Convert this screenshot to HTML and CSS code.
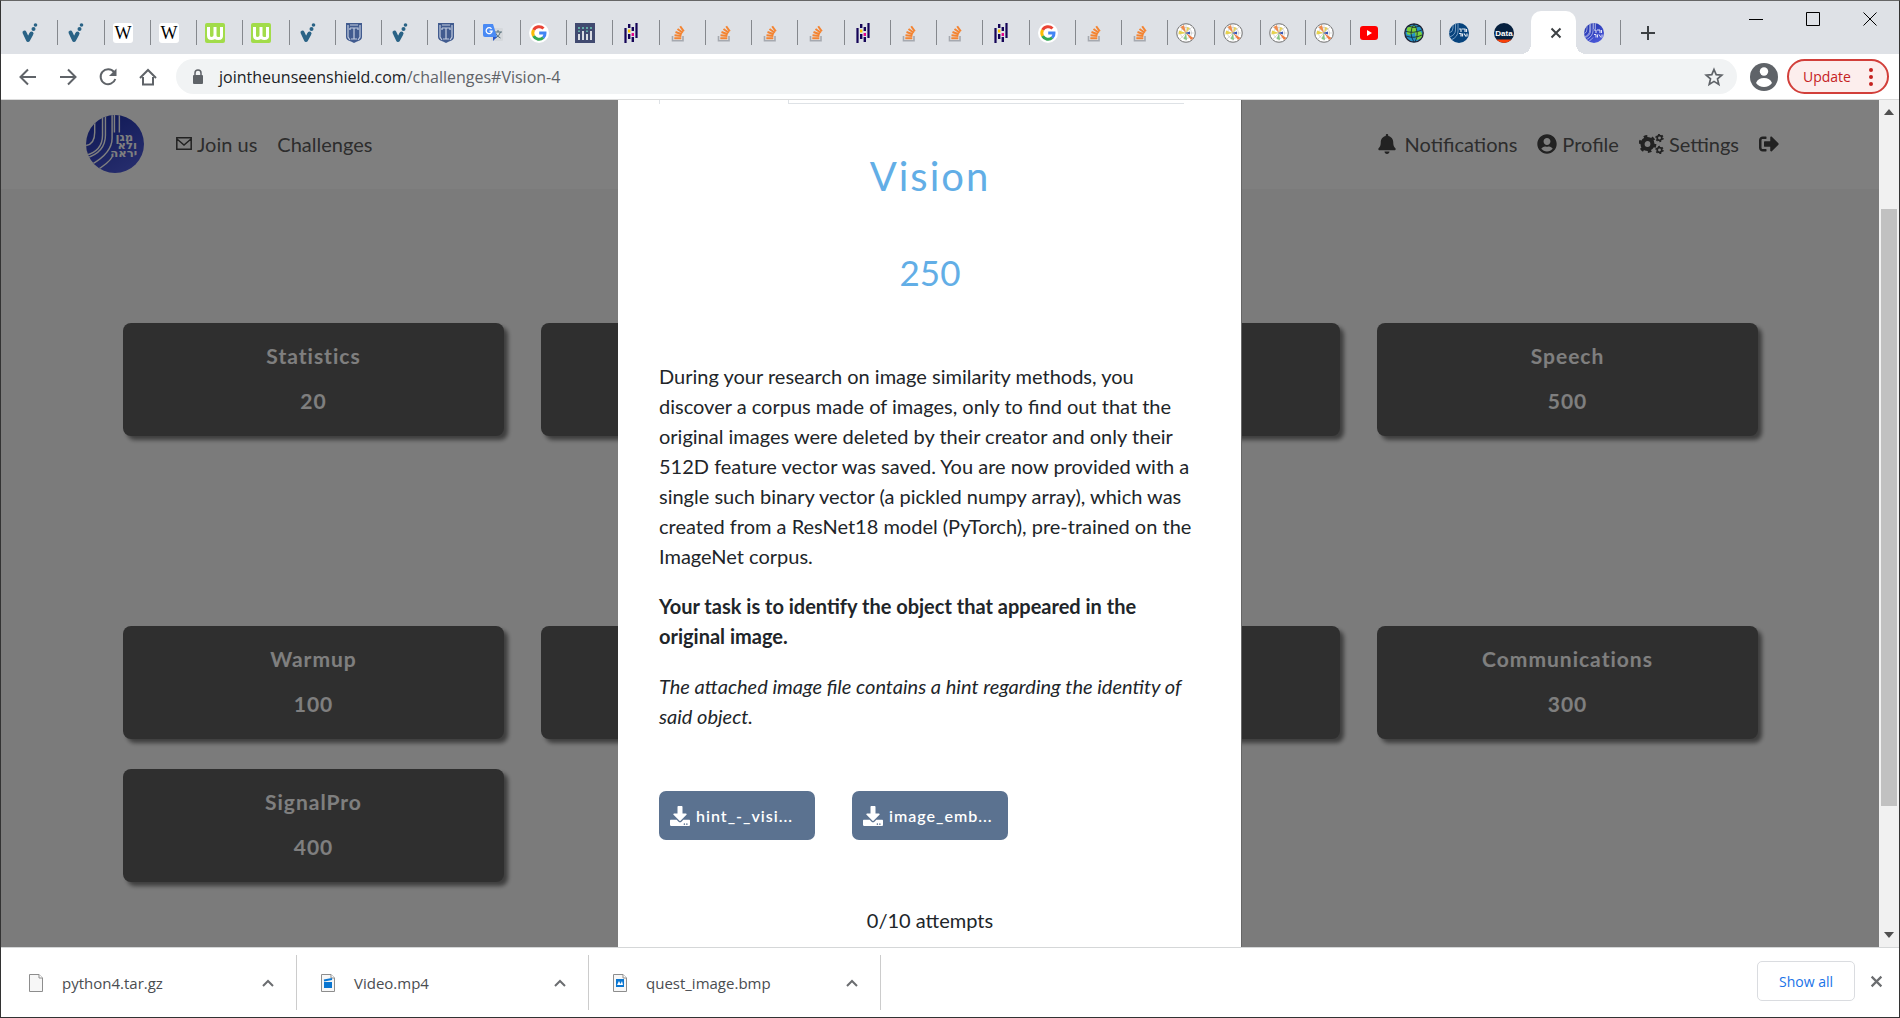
FILE: index.html
```html
<!DOCTYPE html>
<html lang="en">
<head>
<meta charset="utf-8">
<title>Challenges</title>
<link rel="stylesheet" href="styles.css">
</head>
<body>
<svg class="sprite" aria-hidden="true">
  <defs>
    <linearGradient id="shieldFill" x1="0" y1="0" x2="0.6" y2="1"><stop offset="0" stop-color="#1c2fa8"/><stop offset="1" stop-color="#4a58d8"/></linearGradient>
    <clipPath id="round"><circle cx="10" cy="10" r="10"/></clipPath>
  </defs>
  <symbol id="i-check" viewBox="0 0 20 20"><path d="M4.500 9.500 8 17 11 11.500" fill="none" stroke="#2a6386" stroke-width="4" stroke-linecap="round" stroke-linejoin="round"/><circle cx="11.500" cy="10.500" r="2" fill="#2a6386"/><circle cx="13.500" cy="6" r="2" fill="#2a6386"/><circle cx="15.500" cy="2" r="1.800" fill="#2a6386"/></symbol>
  <symbol id="i-wgreen" viewBox="0 0 20 20"><rect width="20" height="20" rx="2" fill="#a2dc4a"/><path d="M3.500 4v8.500q0 3 3 3t3.500-3V4v8.500q0 3 3.500 3t3-3V4" fill="none" stroke="#fff" stroke-width="3"/></symbol>
  <symbol id="i-emblem" viewBox="0 0 20 20"><path d="M2 0h16v14q0 3-5 4.500L10 20l-3-1.500Q2 17 2 14z" fill="#415b8f"/><path d="M4 2v12l2 3M16 2v12l-2 3M6 2h8M6 5h8v2M6 5v2M10 5v11M7 16h6" fill="none" stroke="#c3cde0" stroke-width="1.200"/></symbol>
  <symbol id="i-translate" viewBox="0 0 20 20"><rect x="8" y="5" width="12" height="13" rx="1" fill="#d5d8dc"/><path d="M11 9h8M15 7v2M17.500 9q-1 4-5 6M12.500 10q2 4 5 5" stroke="#57707c" fill="none"/><path d="M1 1h9l4 13H2q-2 0-2-2V2q0-1 1-1z" fill="#4a8af4"/><path d="m10 14 4 0-4 4z" fill="#2a56c6"/><path d="M8.500 5.800a3 3 0 1 0 .6 2.400H6.500" fill="none" stroke="#fff" stroke-width="1.300"/></symbol>
  <symbol id="i-google" viewBox="0 0 20 20"><circle cx="10" cy="10" r="10" fill="#fff"/><g fill="none" stroke-width="3"><path d="M14.500 5.500A6.200 6.200 0 0 0 4.600 7" stroke="#ea4335"/><path d="M4.600 7a6.200 6.200 0 0 0 0 6" stroke="#fbbc05"/><path d="M4.600 13a6.200 6.200 0 0 0 9.600 1.700" stroke="#34a853"/><path d="M14.200 14.700A6 6 0 0 0 16 10H10.200" stroke="#4285f4"/></g></symbol>
  <symbol id="i-plotly" viewBox="0 0 20 20"><rect width="20" height="20" fill="#414a70"/><path d="M4 11v6M8 8v9M12 11v6M16 8v9" stroke="#fff" stroke-width="1.600"/><path d="M4 4v2M4 7.500v1.500M8 4v2M12 4v2M12 7.500v1.500M16 4v2" stroke="#69c4b5" stroke-width="1.600"/></symbol>
  <symbol id="i-pandas" viewBox="0 0 20 20"><path d="M4.500 5v15M15.500 0v15" stroke="#150458" stroke-width="2.200"/><path d="M8.200 1v4M8.200 11v5M11.800 4v4M11.800 14v5" stroke="#150458" stroke-width="2.400"/><path d="M8.200 6.500v3" stroke="#ffca00" stroke-width="2.400"/><path d="M11.800 10v3" stroke="#e70488" stroke-width="2.400"/></symbol>
  <symbol id="i-stack" viewBox="0 0 20 20"><path d="M4.500 13v4.800h10.500V13" fill="none" stroke="#a5a9b0" stroke-width="1.600"/><path d="M6.300 15.300h7M6.500 12.300l6.900.7M7.500 9l6.300 2.200M9.500 6l5.300 3.800M12.200 3.200l3.600 5.200" stroke="#f48432" stroke-width="2"/></symbol>
  <symbol id="i-mpl" viewBox="0 0 20 20"><circle cx="10" cy="10" r="9.300" fill="#fff" stroke="#6d6d6d"/><circle cx="10" cy="10" r="5.500" fill="none" stroke="#bbb" stroke-width=".6"/><path d="M0 10h20M10 0v20M3 3l14 14M17 3 3 17" stroke="#bbb" stroke-width=".5"/><path d="M10 10 4.500 4l3.500-2z" fill="#f08a4b"/><path d="M10 10 2.500 11.500l.5-4z" fill="#e7d24d"/><path d="m10 10 5 7 2.500-2z" fill="#ee7d42"/><path d="m10 10 1-6 3 1z" fill="#e5cf5a"/><path d="m10 10-2.500 6 3.500 1z" fill="#85c785"/><path d="m9 10 5-1.500v3z" fill="#3957b5"/></symbol>
  <symbol id="i-youtube" viewBox="0 0 20 20"><rect x="1" y="3" width="18" height="14" rx="3" fill="#f00"/><path d="m8 7 5 3-5 3z" fill="#fff"/></symbol>
  <symbol id="i-globe" viewBox="0 0 20 20"><circle cx="10" cy="10" r="9.200" fill="#2492c8" stroke="#223" stroke-width="1.300"/><path d="M3 5q6-4 9-1t-2 6-7 1zM11 9q6-3 7 2t-6 6z" fill="#7bd03b"/><path d="M2 13q8 3 16-1M1 8q8 3 17-1M4 3q6 3 12 0M10 1q-6 9 0 18M10 1q6 9 1 18" fill="none" stroke="#123" stroke-width=".8"/></symbol>
  <symbol id="i-shield-blue" viewBox="0 0 20 20"><circle cx="10" cy="10" r="10" fill="#06437d"/><g clip-path="url(#round)" fill="none" stroke="#8fb0d0" stroke-width=".8"><path d="M4 0v5q0 4-4 5M6.500 0v7q0 5-6 7M9 0v8q0 6-7 9"/></g></symbol>
  <symbol id="i-data" viewBox="0 0 20 20"><g clip-path="url(#round)"><rect width="20" height="20" fill="#06203f"/><rect y="16.500" width="20" height="4" fill="#f9410a"/></g></symbol>
  <symbol id="i-shield" viewBox="0 0 20 20"><circle cx="10" cy="10" r="10" fill="url(#shieldFill)"/><g clip-path="url(#round)" fill="none" stroke="#fff" stroke-width=".5"><path d="M3 2v4q0 4-3 4.500M5.700 0v7q0 5.500-6 7M6.700 0v7q0 6-7 8M9 0v8q0 5-7 9M9.800 0v6M11.500 0v6M9 14.500q-1 2-6 5"/></g></symbol>
  <symbol id="i-bell" viewBox="0 0 448 512"><path d="M224 512c35.320 0 63.970-28.650 63.970-64H160.030c0 35.350 28.650 64 63.970 64zm215.390-149.710c-19.320-20.760-55.470-51.990-55.470-154.290 0-77.700-54.480-139.900-127.940-155.160V32c0-17.670-14.320-32-31.980-32s-31.980 14.330-31.980 32v20.840C118.560 68.100 64.080 130.300 64.080 208c0 102.300-36.150 133.530-55.470 154.290-6 6.450-8.660 14.160-8.610 21.710.110 16.400 12.980 32 32.100 32h383.800c19.120 0 32-15.600 32.100-32 .050-7.550-2.610-15.270-8.610-21.710z"/></symbol>
  <symbol id="i-user" viewBox="0 0 496 512"><path d="M248 8C111 8 0 119 0 256s111 248 248 248 248-111 248-248S385 8 248 8zm0 96c48.600 0 88 39.400 88 88s-39.400 88-88 88-88-39.400-88-88 39.400-88 88-88zm0 344c-58.700 0-111.300-26.600-146.500-68.200 18.800-35.400 55.600-59.800 98.500-59.800 2.400 0 4.800.4 7.100 1.100 13 4.200 26.600 6.900 40.900 6.900 14.300 0 28-2.700 40.900-6.900 2.300-.7 4.700-1.100 7.100-1.100 42.900 0 79.700 24.400 98.500 59.800C359.300 421.400 306.700 448 248 448z"/></symbol>
  <symbol id="i-cogs" viewBox="0 0 25 20"><g fill="none" stroke="#444"><circle cx="8.500" cy="10" r="5" stroke-width="4.200"/><circle cx="8.500" cy="10" r="7.600" stroke-width="2.600" stroke-dasharray="3.560 4.400"/><circle cx="20.500" cy="4" r="2.300" stroke-width="1.700"/><circle cx="20.500" cy="4" r="3.500" stroke-width="1.400" stroke-dasharray="1.830 1.830"/><circle cx="20.500" cy="16" r="2.300" stroke-width="1.700"/><circle cx="20.500" cy="16" r="3.500" stroke-width="1.400" stroke-dasharray="1.830 1.830"/></g></symbol>
  <symbol id="i-signout" viewBox="0 0 512 512"><path d="M497 273L329 441c-15 15-41 4.500-41-17v-96H152c-13.300 0-24-10.700-24-24v-96c0-13.300 10.700-24 24-24h136V88c0-21.400 25.900-32 41-17l168 168c9.300 9.400 9.300 24.600 0 34zM192 436v-40c0-6.600-5.400-12-12-12H96c-17.700 0-32-14.300-32-32V160c0-17.700 14.300-32 32-32h84c6.600 0 12-5.400 12-12V76c0-6.600-5.400-12-12-12H96c-53 0-96 43-96 96v192c0 53 43 96 96 96h84c6.600 0 12-5.400 12-12z"/></symbol>
  <symbol id="i-download" viewBox="0 0 512 512"><path d="M216 0h80c13.300 0 24 10.700 24 24v168h87.700c17.800 0 26.700 21.500 14.100 34.100L269.700 378.300c-7.500 7.500-19.800 7.500-27.300 0L90.100 226.100c-12.600-12.600-3.700-34.100 14.100-34.100H192V24c0-13.300 10.700-24 24-24zm296 376v112c0 13.300-10.700 24-24 24H24c-13.300 0-24-10.700-24-24V376c0-13.300 10.700-24 24-24h146.700l49 49c20.100 20.100 52.500 20.100 72.600 0l49-49H488c13.300 0 24 10.700 24 24zm-124 88c0-11-9-20-20-20s-20 9-20 20 9 20 20 20 20-9 20-20zm64 0c0-11-9-20-20-20s-20 9-20 20 9 20 20 20 20-9 20-20z" fill="#fff"/></symbol>
  <symbol id="i-x" viewBox="0 0 12 12"><path d="m1.500 1.500 9 9m0-9-9 9" stroke="currentColor" stroke-width="2" fill="none"/></symbol>
  <symbol id="i-up" viewBox="0 0 12 8"><path d="m1 7 5-5 5 5" stroke="#6b6d70" stroke-width="2" fill="none"/></symbol>
  <symbol id="i-page" viewBox="0 0 14 18"><path d="M.5.5h9.500l3.500 3.500v13.500H.5z" fill="#f7f7f7" stroke="#8d8d8d"/><path d="M10 .5V4h3.500" fill="#fff" stroke="#8d8d8d"/></symbol>
</svg>

<div class="window">
  <header class="titlebar">
    <nav class="tabs" aria-label="Tabs">
      <div class="tab"><svg><use href="#i-check"/></svg></div>
      <div class="tab"><svg><use href="#i-check"/></svg></div>
      <div class="tab"><svg viewBox="0 0 20 20"><rect width="20" height="20" rx="3" fill="#fff"/><text class="wiki" x="10" y="16">W</text></svg></div>
      <div class="tab"><svg viewBox="0 0 20 20"><rect width="20" height="20" rx="3" fill="#fff"/><text class="wiki" x="10" y="16">W</text></svg></div>
      <div class="tab"><svg><use href="#i-wgreen"/></svg></div>
      <div class="tab"><svg><use href="#i-wgreen"/></svg></div>
      <div class="tab"><svg><use href="#i-check"/></svg></div>
      <div class="tab"><svg><use href="#i-emblem"/></svg></div>
      <div class="tab"><svg><use href="#i-check"/></svg></div>
      <div class="tab"><svg><use href="#i-emblem"/></svg></div>
      <div class="tab"><svg><use href="#i-translate"/></svg></div>
      <div class="tab"><svg><use href="#i-google"/></svg></div>
      <div class="tab"><svg><use href="#i-plotly"/></svg></div>
      <div class="tab"><svg><use href="#i-pandas"/></svg></div>
      <div class="tab"><svg><use href="#i-stack"/></svg></div>
      <div class="tab"><svg><use href="#i-stack"/></svg></div>
      <div class="tab"><svg><use href="#i-stack"/></svg></div>
      <div class="tab"><svg><use href="#i-stack"/></svg></div>
      <div class="tab"><svg><use href="#i-pandas"/></svg></div>
      <div class="tab"><svg><use href="#i-stack"/></svg></div>
      <div class="tab"><svg><use href="#i-stack"/></svg></div>
      <div class="tab"><svg><use href="#i-pandas"/></svg></div>
      <div class="tab"><svg><use href="#i-google"/></svg></div>
      <div class="tab"><svg><use href="#i-stack"/></svg></div>
      <div class="tab"><svg><use href="#i-stack"/></svg></div>
      <div class="tab"><svg><use href="#i-mpl"/></svg></div>
      <div class="tab"><svg><use href="#i-mpl"/></svg></div>
      <div class="tab tab-narrow"><svg><use href="#i-mpl"/></svg></div>
      <div class="tab tab-narrow"><svg><use href="#i-mpl"/></svg></div>
      <div class="tab tab-narrow"><svg><use href="#i-youtube"/></svg></div>
      <div class="tab tab-narrow"><svg><use href="#i-globe"/></svg></div>
      <div class="tab tab-narrow"><svg viewBox="0 0 20 20"><use href="#i-shield-blue"/><path d="M10 6h2v3M13 6h3v3M17.500 6v3M10 10.500h2v3M13.500 10.500v3M15 10.500l2 3M18 10.500v3" stroke="#e3eaf2" stroke-width="1.200" fill="none"/></svg></div>
      <div class="tab tab-narrow tab-last"><svg viewBox="0 0 20 20"><use href="#i-data"/><text class="data" x="10" y="13">Data</text></svg></div>
      <div class="tab tab-narrow tab-active"><button class="icon-btn tab-close" aria-label="Close tab"><svg><use href="#i-x"/></svg></button></div>
      <div class="tab tab-narrow"><svg viewBox="0 0 20 20"><use href="#i-shield"/><path d="M10 7h2v3M13 7h3v3M17.500 7v3M10 11.500h2v3M13.500 11.500v3M15 11.500l2 3M18 11.500v3" stroke="#e3e4f8" stroke-width="1" fill="none"/></svg></div>
    </nav>
    <button class="icon-btn new-tab" aria-label="New tab"><svg viewBox="0 0 16 16"><path d="M8 1v14M1 8h14" stroke="#3c4043" stroke-width="2"/></svg></button>
    <div class="window-controls">
      <button class="icon-btn" aria-label="Minimize"><svg viewBox="0 0 14 14"><path d="M0 7.500h14" stroke="#000"/></svg></button>
      <button class="icon-btn" aria-label="Maximize"><svg viewBox="0 0 14 14"><path d="M.5.5h13v13H.5z" fill="none" stroke="#000"/></svg></button>
      <button class="icon-btn" aria-label="Close"><svg viewBox="0 0 14 14"><path d="m.5.5 13 13m0-13-13 13" stroke="#000"/></svg></button>
    </div>
  </header>

  <div class="toolbar">
    <div class="nav-buttons">
      <button class="icon-btn" aria-label="Back"><svg viewBox="0 0 20 20"><path d="M18 10H3M10 2.500 2.500 10l7.500 7.500" fill="none" stroke="#5f6368" stroke-width="2"/></svg></button>
      <button class="icon-btn" aria-label="Forward"><svg viewBox="0 0 20 20"><path d="M2 10h15M10 2.500l7.500 7.500-7.500 7.500" fill="none" stroke="#5f6368" stroke-width="2"/></svg></button>
      <button class="icon-btn" aria-label="Reload"><svg viewBox="0 0 20 20"><path d="M16 5a7.500 7.500 0 1 0 1.300 7" fill="none" stroke="#5f6368" stroke-width="2"/><path d="M18.500 1.500V9H11z" fill="#5f6368"/></svg></button>
      <button class="icon-btn" aria-label="Home"><svg viewBox="0 0 20 20"><path d="M5 10v7.500h10V10M2 11l8-8 8 8" fill="none" stroke="#5f6368" stroke-width="2"/></svg></button>
    </div>
    <div class="omnibox">
      <svg class="lock" viewBox="0 0 12 16"><rect x="1" y="6" width="10" height="9" rx="1" fill="#5f6368"/><path d="M3 6V4a3 3 0 0 1 6 0v2" fill="none" stroke="#5f6368" stroke-width="1.500"/></svg>
      <div class="url"><span class="url-host">jointheunseenshield.com</span>/challenges#Vision-4</div>
      <button class="icon-btn" aria-label="Bookmark"><svg viewBox="0 0 20 20"><path d="m10 2.500 2.200 5.200 5.600.5-4.300 3.700 1.300 5.500-4.800-3-4.800 3 1.300-5.500-4.300-3.700 5.600-.5z" fill="none" stroke="#5f6368" stroke-width="1.700"/></svg></button>
    </div>
    <button class="icon-btn avatar" aria-label="Account"><svg viewBox="0 0 28 28"><circle cx="14" cy="14" r="14" fill="#5f6368"/><circle cx="14" cy="8.500" r="4.200" fill="#fff"/><path d="M6 20q2-5 8-5t8 5q-3 4-8 4t-8-4z" fill="#fff"/></svg></button>
    <button class="update">Update <svg viewBox="0 0 4 18"><g fill="#c5221f"><circle cx="2" cy="2" r="2"/><circle cx="2" cy="9" r="2"/><circle cx="2" cy="16" r="2"/></g></svg></button>
  </div>

  <div class="viewport">
    <div class="page">
      <nav class="site-nav">
        <a class="logo" href="#home" aria-label="Home"><svg viewBox="0 0 20 20"><use href="#i-shield"/><g class="logo-text"><text x="13.200" y="9">מגן</text><text x="14.200" y="11.800">ולא</text><text x="13" y="14.600">יראה</text></g></svg></a>
        <a href="#join"><svg class="mail" viewBox="0 0 16 13"><path d="M.8.8h14.400v11.400H.8zM1 2l7 6 7-6" fill="none" stroke="#444" stroke-width="1.500"/></svg>Join us</a>
        <a href="#challenges">Challenges</a>
        <span class="spacer"></span>
        <a class="wide" href="#notifications"><svg class="bell"><use href="#i-bell"/></svg>Notifications</a>
        <a href="#profile"><svg><use href="#i-user"/></svg>Profile</a>
        <a href="#settings"><svg class="cogs"><use href="#i-cogs"/></svg>Settings</a>
        <a href="#logout" aria-label="Log out"><svg><use href="#i-signout"/></svg></a>
      </nav>
      <main class="board">
        <section class="group">
          <button class="challenge"><span>Statistics</span><span>20</span></button>
          <button class="challenge" aria-label="Challenge"></button>
          <button class="challenge" aria-label="Challenge"></button>
          <button class="challenge"><span>Speech</span><span>500</span></button>
        </section>
        <section class="group">
          <button class="challenge"><span>Warmup</span><span>100</span></button>
          <button class="challenge" aria-label="Challenge"></button>
          <button class="challenge" aria-label="Challenge"></button>
          <button class="challenge"><span>Communications</span><span>300</span></button>
          <button class="challenge"><span>SignalPro</span><span>400</span></button>
        </section>
      </main>
    </div>

    <div class="backdrop">
      <div class="modal" role="dialog" aria-labelledby="title">
        <div class="modal-tabs"><span class="modal-tab"></span></div>
        <h2 class="title" id="title">Vision</h2>
        <h3 class="points">250</h3>
        <div class="description">
          <p>During your research on image similarity methods, you discover a corpus made of images, only to find out that the original images were deleted by their creator and only their 512D feature vector was saved. You are now provided with a single such binary vector (a pickled numpy array), which was created from a ResNet18 model (PyTorch), pre-trained on the ImageNet corpus.</p>
          <p><strong>Your task is to identify the object that appeared in the original image.</strong></p>
          <p><em>The attached image file contains a hint regarding the identity of said object.</em></p>
        </div>
        <div class="files">
          <a class="file" href="#hint"><svg><use href="#i-download"/></svg><span>hint_-_visi...</span></a>
          <a class="file" href="#image"><svg><use href="#i-download"/></svg><span>image_emb...</span></a>
        </div>
        <p class="attempts">0/10 attempts</p>
      </div>
    </div>

    <div class="scrollbar" aria-hidden="true">
      <svg viewBox="0 0 10 6"><path d="M0 6 5 0l5 6z" fill="#505050"/></svg>
      <div class="track"><div class="thumb"></div></div>
      <svg viewBox="0 0 10 6"><path d="M0 0h10L5 6z" fill="#505050"/></svg>
    </div>
  </div>

  <footer class="downloads">
    <div class="download"><svg class="page-icon"><use href="#i-page"/></svg><span>python4.tar.gz</span><button class="icon-btn" aria-label="Options"><svg><use href="#i-up"/></svg></button></div>
    <div class="download"><svg class="page-icon" viewBox="0 0 14 18"><use href="#i-page"/><path d="M3 8h8v6H3z" fill="#0a76d1"/><path d="m3 6.500 8-1.500" stroke="#0a76d1" stroke-width="2"/></svg><span>Video.mp4</span><button class="icon-btn" aria-label="Options"><svg><use href="#i-up"/></svg></button></div>
    <div class="download"><svg class="page-icon" viewBox="0 0 14 18"><use href="#i-page"/><path d="M3 5h8v8H3z" fill="#0a76d1"/><path d="m4 11 2-4 1.500 3L9 7l1 4z" fill="#fff"/></svg><span>quest_image.bmp</span><button class="icon-btn" aria-label="Options"><svg><use href="#i-up"/></svg></button></div>
    <span class="spacer"></span>
    <div class="shelf-actions">
      <button class="show-all">Show all</button>
      <button class="icon-btn close-bar" aria-label="Close downloads"><svg><use href="#i-x"/></svg></button>
    </div>
  </footer>
</div>
</body>
</html>
```

FILE: styles.css
```css
* { box-sizing: border-box; }
body { margin: 0; font-family: Lato, "Liberation Sans", sans-serif; font-size: 20px; color: #212529; }
.sprite { position: absolute; width: 0; height: 0; }
button { font: inherit; }
a { color: inherit; text-decoration: none; }
svg { display: block; flex: none; }
.spacer { flex: 1; }

.window {
  display: grid;
  grid-template-rows: auto auto minmax(0, 1fr) auto;
  height: 100vh;
  border: 1px solid #333;
  border-top-color: #666;
  background: #fff;
}
.icon-btn {
  display: flex;
  align-items: center;
  justify-content: center;
  padding: 0;
  border: 0;
  background: none;
}

/* Tab strip */
.titlebar { display: flex; align-items: flex-end; height: 53px; padding-left: 11px; background: #dee1e6; }
.tabs { display: flex; width: calc(100% - 278px); }
.tab { position: relative; display: flex; align-items: center; flex: 37 1 0; min-width: 0; height: 43px; }
.tab > svg { width: 20px; height: 20px; margin-left: 8px; }
.tab-narrow { flex-grow: 36; }
.tab::after { content: ""; position: absolute; right: 0; top: 9px; width: 1px; height: 25px; background: #85888d; }
.tab-last::after { display: none; }
.tab-active { justify-content: center; border-radius: 10px 10px 0 0; background: #fff; }
.tab-active::before,
.tab-active::after { content: ""; position: absolute; top: auto; bottom: 0; width: 10px; height: 10px; }
.tab-active::before { left: -10px; background: radial-gradient(circle at 0 0, transparent 10px, #fff 10px); }
.tab-active::after { right: -10px; background: radial-gradient(circle at 100% 0, transparent 10px, #fff 10px); }
.tab-close { margin-left: 6px; color: #3c4043; }
.tab-close svg { width: 12px; height: 12px; }
.wiki { font-family: "Liberation Serif", serif; font-size: 18px; text-anchor: middle; }
.data { font-family: "Liberation Sans", sans-serif; font-size: 8px; font-weight: 700; text-anchor: middle; fill: #fff; }
.new-tab { width: 32px; height: 43px; margin-left: 11px; }
.new-tab svg { width: 16px; height: 16px; }
.window-controls { display: flex; align-self: flex-start; gap: 43px; margin: 11px 22px 0 auto; }
.window-controls svg { width: 14px; height: 14px; }

/* Address bar */
.toolbar { display: flex; align-items: center; height: 46px; padding: 0 10px 0 17px; border-bottom: 1px solid #dadada; }
.nav-buttons { display: flex; gap: 20px; }
.nav-buttons svg, .omnibox .icon-btn svg { width: 20px; height: 20px; }
.omnibox { display: flex; flex: 1; align-items: center; height: 35px; margin-left: 18px; padding: 0 13px 0 16px; border-radius: 18px; background: #f1f3f4; }
.lock { width: 12px; height: 16px; }
.url { flex: 1; margin-left: 15px; font-family: "Open Sans", "Noto Sans", sans-serif; font-size: 16px; color: #5f6368; }
.url-host { color: #202124; }
.avatar { margin: 0 9px 0 13px; }
.avatar svg { width: 28px; height: 28px; }
.update { display: flex; align-items: center; justify-content: space-between; width: 102px; height: 35px; padding: 0 14px; border: 2px solid #d23f3a; border-radius: 18px; background: #fceeed; color: #c5221f; font-family: "Open Sans", "Noto Sans", sans-serif; font-size: 14px; }
.update svg { width: 4px; height: 18px; }

/* Page */
.viewport { position: relative; display: grid; grid-template-columns: minmax(0, 1fr) 20px; overflow: hidden; }
.page { overflow: hidden; background: #f7f7f7; }
.site-nav { display: flex; align-items: center; gap: 20px; height: 89px; padding: 0 100px 2px 85px; background: #fff; color: #5a5a5a; line-height: 30px; }
.site-nav a { display: flex; align-items: center; gap: 5px; }
.site-nav svg { width: 20px; height: 20px; fill: #444; }
.site-nav .logo { margin-right: 12px; }
.site-nav .logo svg { width: 58px; height: 58px; }
.logo-text { fill: #fff; font-family: "DejaVu Sans", sans-serif; font-size: 4px; font-weight: 700; text-anchor: middle; }
.site-nav .mail { width: 16px; height: 13px; }
.site-nav .bell { width: 18px; }
.site-nav .wide { gap: 9px; }
.site-nav .cogs { width: 25px; }
.board { display: grid; gap: 190px; padding: 134px 121px 0 122px; }
.group { display: grid; grid-template-columns: repeat(4, minmax(0, 1fr)); gap: 30px 37px; }
.challenge {
  display: flex;
  flex-direction: column;
  align-items: center;
  gap: 15px;
  height: 113px;
  padding: 18px 0 0;
  border: 0;
  border-radius: 8px;
  background: #5e5e5e;
  box-shadow: 4px 4px 4px rgba(0, 0, 0, 0.5);
  color: #fff;
  font-size: 21px;
  font-weight: 700;
  letter-spacing: 1px;
  line-height: 30px;
}

/* Challenge dialog */
.backdrop { position: absolute; inset: 0 20px 0 0; display: flex; justify-content: center; overflow: hidden; padding-right: 20px; background: rgba(0, 0, 0, 0.5); }
.modal { width: 624px; height: max-content; padding: 0 40px 40px 41px; border-right: 1px solid #666; background: #fff; text-align: center; }
.modal-tabs { display: flex; width: 525px; height: 4px; border-bottom: 1px solid #dee2e6; }
.modal-tab { width: 130px; height: 4px; border: 0 solid #dee2e6; border-width: 0 1px; background: #fff; }
.title { margin: 48px 0 0; color: #62aee6; font-size: 40px; font-weight: 400; letter-spacing: 2px; line-height: 48px; }
.points { margin: 51px 0 0; color: #62aee6; font-size: 35px; font-weight: 400; line-height: 42px; }
.description { margin-top: 68px; text-align: left; line-height: 30px; }
.description p { margin: 0 0 20px; }
.files { display: flex; gap: 37px; margin-top: 60px; }
.file { display: flex; align-items: center; gap: 6px; width: 156px; height: 49px; padding: 0 11px; border-radius: 7px; background: #5b7290; color: #fff; font-size: 16px; font-weight: 600; letter-spacing: 1px; }
.file svg { width: 20px; height: 20px; }
.attempts { margin: 65px 0 0; line-height: 30px; }

.scrollbar { display: flex; flex-direction: column; align-items: center; padding: 9px 0; background: #f1f1f1; }
.scrollbar svg { width: 10px; height: 6px; }
.track { flex: 1; width: 16px; padding: 94px 0 126px; }
.thumb { height: 100%; background: #c1c1c1; }

/* Download shelf */
.downloads { display: flex; align-items: center; height: 70px; padding-left: 4px; border-top: 1px solid #d5d7d8; color: #4a4d51; font-family: "Open Sans", "Noto Sans", sans-serif; font-size: 15px; }
.download { display: flex; align-items: center; width: 292px; height: 55px; padding: 0 22px 0 24px; border-right: 1px solid #ccc; }
.download span { flex: 1; margin-left: 19px; }
.download .icon-btn svg { width: 12px; height: 8px; }
.page-icon { width: 14px; height: 18px; }
.shelf-actions { display: flex; align-items: center; gap: 15px; padding: 0 16px 3px 0; }
.show-all { width: 98px; height: 40px; border: 1px solid #dadce0; border-radius: 5px; background: #fff; color: #1a73e8; font-size: 14px; }
.close-bar { color: #6b6d70; }
.close-bar svg { width: 13px; height: 13px; }
```
